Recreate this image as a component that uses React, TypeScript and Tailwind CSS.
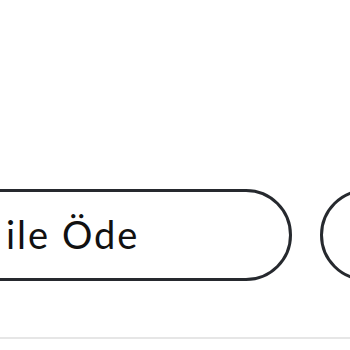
import React from 'react';

const App: React.FC = () => {
  return (
    <div className="w-[350px] h-[350px] overflow-hidden bg-white" style={{ fontFamily: 'Lato, "Open Sans", sans-serif' }}>
      <div className="flex flex-col pt-[189px]">
        {/* Payment buttons */}
        <div className="flex items-center gap-[28px] ml-[-60px]">
          <button className="w-[352px] h-[92px] shrink-0 rounded-full border-[3px] border-[#26292e] bg-white flex items-center pl-[63px]">
            <span className="text-[38px] leading-none tracking-[2px] text-[#111] mt-[-2px]">ile Öde</span>
          </button>
          <button className="w-[92px] h-[92px] shrink-0 rounded-full border-[3px] border-[#26292e] bg-white" />
        </div>

        {/* Divider */}
        <div className="mt-[56px] h-[2px] bg-[#e6e6e6]" />
      </div>
    </div>
  );
};

export default App;
